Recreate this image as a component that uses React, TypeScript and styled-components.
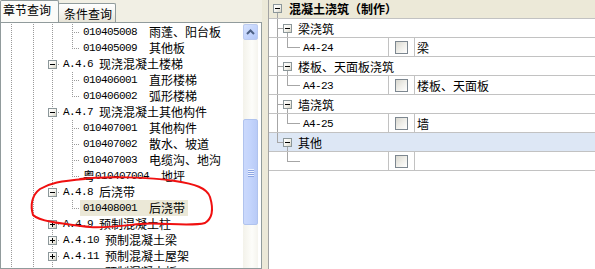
import React from 'react';
import styled, { createGlobalStyle } from 'styled-components';

const CJK = `"Noto Sans CJK SC", "Noto Sans CJK JP", "DejaVu Sans", sans-serif`;
const MONO = `"Liberation Mono", "DejaVu Sans Mono", monospace`;
const DOT = '#9a9a9a';
const SOLID = '#a6a6a6';

const GlobalStyle = createGlobalStyle`
  html, body { margin: 0; padding: 0; background: #ece9d8; overflow: hidden; }
  body { font-family: ${CJK}; font-size: 12px; color: #000; }
  * { box-sizing: border-box; }
`;

type VMode = 'full' | 'top' | 'bottom' | 'none';
interface GuideProps {
  $w: number;
  $at: number;
  $v: VMode;
  $h?: boolean;
  $dotted?: boolean;
  $rowH: number;
  $mid: number;
  $pad?: number;
  $boxTop?: number;
}

function guideBg(p: GuideProps) {
  const c = p.$dotted ? DOT : SOLID;
  const vImg = p.$dotted
    ? `repeating-linear-gradient(to bottom, ${c} 0 1px, transparent 1px 2px)`
    : `linear-gradient(${c}, ${c})`;
  const hImg = p.$dotted
    ? `repeating-linear-gradient(to right, ${c} 0 1px, transparent 1px 2px)`
    : `linear-gradient(${c}, ${c})`;
  const imgs: string[] = [];
  const sizes: string[] = [];
  const poss: string[] = [];
  if (p.$v === 'full') {
    imgs.push(vImg);
    sizes.push(`1px ${p.$rowH}px`);
    poss.push(`${p.$at}px 0px`);
  } else if (p.$v === 'top') {
    imgs.push(vImg);
    sizes.push(`1px ${p.$mid + 1}px`);
    poss.push(`${p.$at}px 0px`);
  } else if (p.$v === 'bottom') {
    imgs.push(vImg);
    sizes.push(`1px ${p.$rowH - p.$mid}px`);
    poss.push(`${p.$at}px ${p.$mid}px`);
  }
  if (p.$h) {
    imgs.push(hImg);
    sizes.push(`${p.$w - p.$at}px 1px`);
    poss.push(`${p.$at}px ${p.$mid}px`);
  }
  if (!imgs.length) return 'background: none;';
  return `background-image: ${imgs.join(', ')}; background-size: ${sizes.join(', ')}; background-position: ${poss.join(', ')}; background-repeat: no-repeat;`;
}

const Guide = styled.div<GuideProps>`
  width: ${(p) => p.$w}px;
  height: ${(p) => p.$rowH}px;
  flex-shrink: 0;
  display: flex;
  align-items: flex-start;
  padding-left: ${(p) => p.$pad ?? 0}px;
  padding-top: ${(p) => p.$boxTop ?? 0}px;
  ${(p) => guideBg(p)}
`;

const ExpandBox = styled.span<{ $open: boolean }>`
  position: relative;
  display: block;
  width: 9px;
  height: 9px;
  border: 1px solid #8c979a;
  background: linear-gradient(135deg, #ffffff 0%, #f3f2ec 55%, #d6d3c4 100%);
  flex-shrink: 0;
  &::before {
    content: '';
    position: absolute;
    left: 1px;
    top: 3px;
    width: 5px;
    height: 1px;
    background: #000;
  }
  &::after {
    content: '';
    display: ${(p) => (p.$open ? 'none' : 'block')};
    position: absolute;
    left: 3px;
    top: 1px;
    width: 1px;
    height: 5px;
    background: #000;
  }
`;

/* ---------- frame ---------- */

const Frame = styled.div`
  position: relative;
  width: 595px;
  height: 269px;
  display: flex;
  background: #ece9d8;
  overflow: hidden;
`;

const LeftPanel = styled.div`
  width: 262px;
  flex-shrink: 0;
  display: flex;
  flex-direction: column;
`;

const Splitter = styled.div`
  width: 6px;
  flex-shrink: 0;
  background: #ece9d8;
`;

const RightPanel = styled.div`
  flex: 1;
  border-left: 1px solid #a3a3a3;
  background: #fff;
  display: flex;
  flex-direction: column;
`;

/* ---------- tabs ---------- */

const TabStrip = styled.div`
  height: 22px;
  flex-shrink: 0;
  display: flex;
  align-items: flex-end;
  background: #f1efe4;
`;

const Tab = styled.div<{ $active?: boolean }>`
  height: ${(p) => (p.$active ? 22 : 19)}px;
  width: ${(p) => (p.$active ? 59 : 58)}px;
  padding-left: ${(p) => (p.$active ? 2 : 5)}px;
  padding-top: 1px;
  margin-left: ${(p) => (p.$active ? 0 : -1)}px;
  border: 1px solid #919b9c;
  border-bottom: none;
  border-radius: 2px 2px 0 0;
  background: ${(p) =>
    p.$active
      ? '#fbfbf8'
      : 'linear-gradient(to bottom, #ffffff 0%, #f4f3ee 50%, #e6e3d6 100%)'};
  font-family: ${CJK};
  font-size: 12px;
  line-height: 16px;
  display: flex;
  align-items: ${(p) => (p.$active ? 'flex-start' : 'center')};
  white-space: nowrap;
  z-index: ${(p) => (p.$active ? 2 : 1)};
`;

const TabBody = styled.div`
  flex: 1;
  min-height: 0;
  display: flex;
  border: 1px solid #919b9c;
  background: #fff;
`;

const Tree = styled.div`
  width: 242px;
  flex-shrink: 0;
  padding-top: 1px;
  overflow: hidden;
  display: flex;
  flex-direction: column;
`;

const TreeRow = styled.div`
  display: flex;
  height: 16px;
  flex-shrink: 0;
`;

const TreeLabel = styled.div<{ $selected?: boolean }>`
  display: flex;
  align-items: center;
  height: 16px;
  padding: 0 3px;
  background: ${(p) => (p.$selected ? '#ebe8d7' : 'transparent')};
  white-space: nowrap;
  line-height: 16px;
`;

const Code = styled.span`
  font-family: ${MONO};
  font-size: 11px;
  letter-spacing: -0.6px;
`;

const Han = styled.span<{ $gap?: number }>`
  font-family: ${CJK};
  font-size: 12px;
  margin-left: ${(p) => p.$gap ?? 0}px;
`;

/* ---------- scrollbar ---------- */

const Scrollbar = styled.div`
  width: 15px;
  margin-right: 3px;
  flex-shrink: 0;
  display: flex;
  flex-direction: column;
  background: linear-gradient(to right, #f3f2ea, #fdfdfa 60%, #f5f4ee);
  padding-top: 1px;
`;

const ScrollButton = styled.div`
  height: 16px;
  border: 1px solid #bccbf0;
  border-radius: 2px;
  background: linear-gradient(135deg, #d6e2fd 0%, #c2d3fc 60%, #b3c7f6 100%);
  display: flex;
  align-items: center;
  justify-content: center;
`;

const Thumb = styled.div<{ $offset: number; $size: number }>`
  margin-top: ${(p) => p.$offset}px;
  height: ${(p) => p.$size}px;
  border: 1px solid #b0c3ee;
  border-radius: 2px;
  background: linear-gradient(to right, #cbd9fc 0%, #c3d4fc 50%, #b9cbf7 100%);
  display: flex;
  flex-direction: column;
  align-items: center;
  justify-content: center;
  gap: 1px;
`;

const Grip = styled.span`
  display: block;
  width: 6px;
  height: 1px;
  background: #eef3ff;
  box-shadow: 0 1px 0 #8da6e3;
`;

/* ---------- right grid ---------- */

const RRow = styled.div<{ $tone?: 'head' | 'hl' | 'plain' }>`
  display: flex;
  height: 19px;
  flex-shrink: 0;
  background: linear-gradient(#c2c2c2, #c2c2c2) 0 100% / 100% 1px no-repeat,
    ${(p) => (p.$tone === 'head' ? '#ece9d8' : p.$tone === 'hl' ? '#dde7f5' : '#ffffff')};
`;

const HeadTitle = styled.div`
  margin-left: 6px;
  font-family: ${CJK};
  font-weight: 700;
  font-size: 12px;
  line-height: 18px;
  white-space: nowrap;
`;

const GroupTitle = styled.div`
  font-family: ${CJK};
  font-size: 12px;
  line-height: 18px;
  padding-top: 1px;
  white-space: nowrap;
`;

const CodeCell = styled.div`
  width: 88px;
  flex-shrink: 0;
  padding-left: 3px;
  padding-top: 1px;
  font-family: ${MONO};
  font-size: 11px;
  letter-spacing: -0.6px;
  line-height: 18px;
`;

const CheckCell = styled.div`
  width: 26px;
  height: 18px;
  flex-shrink: 0;
  border-left: 1px solid #c2c2c2;
  padding-left: 6px;
  padding-top: 3px;
`;

const CheckBox = styled.span`
  display: block;
  width: 13px;
  height: 13px;
  border: 1px solid #7d8790;
  background: linear-gradient(135deg, #d9d8d0 0%, #efeee9 50%, #ffffff 100%);
`;

const TextCell = styled.div`
  flex: 1;
  height: 18px;
  border-left: 1px solid #c2c2c2;
  padding-left: 2px;
  padding-top: 1px;
  font-family: ${CJK};
  font-size: 12px;
  line-height: 18px;
  white-space: nowrap;
`;

const Annotation = styled.svg`
  position: absolute;
  left: 0;
  top: 0;
  pointer-events: none;
`;

/* ---------- data ---------- */

type LeftItem =
  | { kind: 'leaf'; code: string; name: string; last?: boolean; selected?: boolean }
  | { kind: 'group'; code: string; name: string; open: boolean };

const leftItems: LeftItem[] = [
  { kind: 'leaf', code: '010405008', name: '雨蓬、阳台板' },
  { kind: 'leaf', code: '010405009', name: '其他板', last: true },
  { kind: 'group', code: 'A.4.6', name: '现浇混凝土楼梯', open: true },
  { kind: 'leaf', code: '010406001', name: '直形楼梯' },
  { kind: 'leaf', code: '010406002', name: '弧形楼梯', last: true },
  { kind: 'group', code: 'A.4.7', name: '现浇混凝土其他构件', open: true },
  { kind: 'leaf', code: '010407001', name: '其他构件' },
  { kind: 'leaf', code: '010407002', name: '散水、坡道' },
  { kind: 'leaf', code: '010407003', name: '电缆沟、地沟' },
  { kind: 'leaf', code: '粤010407004', name: '地坪', last: true },
  { kind: 'group', code: 'A.4.8', name: '后浇带', open: true },
  { kind: 'leaf', code: '010408001', name: '后浇带', last: true, selected: true },
  { kind: 'group', code: 'A.4.9', name: '预制混凝土柱', open: false },
  { kind: 'group', code: 'A.4.10', name: '预制混凝土梁', open: false },
  { kind: 'group', code: 'A.4.11', name: '预制混凝土屋架', open: false },
  { kind: 'group', code: 'A.4.12', name: '预制混凝土板', open: false },
];

function CodeText({ code }: { code: string }) {
  const m = code.match(/^([^\x00-\x7f]*)(.*)$/);
  const pre = m ? m[1] : '';
  const rest = m ? m[2] : code;
  return (
    <>
      {pre && <Han>{pre}</Han>}
      <Code>{rest}</Code>
    </>
  );
}

const T = { $rowH: 16, $mid: 8, $dotted: true };

function LeftRow({ item }: { item: LeftItem }) {
  return (
    <TreeRow>
      <Guide {...T} $w={21} $at={10} $v="full" />
      <Guide {...T} $w={20} $at={11} $v="full" />
      {item.kind === 'leaf' ? (
        <>
          <Guide {...T} $w={20} $at={10} $v="full" />
          <Guide {...T} $w={18} $at={10} $v={item.last ? 'top' : 'full'} $h />
          <TreeLabel $selected={item.selected}>
            <CodeText code={item.code} />
            <Han $gap={12}>{item.name}</Han>
          </TreeLabel>
        </>
      ) : (
        <>
          <Guide {...T} $w={18} $at={10} $v="full" $h $pad={6} $boxTop={4}>
            <ExpandBox $open={item.open} />
          </Guide>
          <TreeLabel>
            <Code>{item.code}</Code>
            <Han $gap={6}>{item.name}</Han>
          </TreeLabel>
        </>
      )}
    </TreeRow>
  );
}

type RightGroup = { title: string; code: string; text: string; hl?: boolean };
const rightGroups: RightGroup[] = [
  { title: '梁浇筑', code: 'A4-24', text: '梁' },
  { title: '楼板、天面板浇筑', code: 'A4-23', text: '楼板、天面板' },
  { title: '墙浇筑', code: 'A4-25', text: '墙' },
  { title: '其他', code: '', text: '', hl: true },
];

const R = { $rowH: 18, $mid: 9 };

function RightGroupRows({ g, last }: { g: RightGroup; last: boolean }) {
  return (
    <>
      <RRow $tone={g.hl ? 'hl' : 'plain'}>
        <Guide {...R} $w={14} $at={8} $v={last ? 'top' : 'full'} $h />
        <Guide {...R} $w={15} $at={4} $v="bottom" $boxTop={5}>
          <ExpandBox $open />
        </Guide>
        <GroupTitle>{g.title}</GroupTitle>
      </RRow>
      <RRow>
        <Guide {...R} $w={14} $at={8} $v={last ? 'none' : 'full'} />
        <Guide {...R} $w={17} $at={4} $v="top" $h />
        <CodeCell>{g.code}</CodeCell>
        <CheckCell>
          <CheckBox />
        </CheckCell>
        <TextCell>{g.text}</TextCell>
      </RRow>
    </>
  );
}

export default function App() {
  return (
    <>
      <GlobalStyle />
      <Frame>
        <LeftPanel>
          <TabStrip>
            <Tab $active>章节查询</Tab>
            <Tab>条件查询</Tab>
          </TabStrip>
          <TabBody>
            <Tree>
              {leftItems.map((it, i) => (
                <LeftRow key={i} item={it} />
              ))}
            </Tree>
            <Scrollbar>
              <ScrollButton>
                <svg width="9" height="6" viewBox="0 0 9 6">
                  <path d="M1 5 L4.5 1.5 L8 5" fill="none" stroke="#4d6185" strokeWidth="2" />
                </svg>
              </ScrollButton>
              <Thumb $offset={79} $size={106}>
                <Grip />
                <Grip />
                <Grip />
                <Grip />
              </Thumb>
            </Scrollbar>
          </TabBody>
        </LeftPanel>
        <Splitter />
        <RightPanel>
          <RRow $tone="head">
            <Guide {...R} $w={14} $at={8} $v="bottom" $pad={4} $boxTop={4}>
              <ExpandBox $open />
            </Guide>
            <HeadTitle>混凝土浇筑（制作）</HeadTitle>
          </RRow>
          {rightGroups.map((g, i) => (
            <RightGroupRows key={i} g={g} last={i === rightGroups.length - 1} />
          ))}
        </RightPanel>
        <Annotation width="595" height="269" viewBox="0 0 595 269">
          <path
            d="M 80 179 C 105 176, 150 177, 175 181 C 195 184, 207 188, 210 197 C 213 207, 213 218, 205 223 C 190 227, 160 222, 140 224 C 120 226, 105 228, 90 227 C 65 224, 40 222, 33 215 C 30 205, 32 195, 40 189 C 50 183, 60 181, 85 179"
            fill="none"
            stroke="#f01010"
            strokeWidth="2"
            strokeLinecap="round"
          />
        </Annotation>
      </Frame>
    </>
  );
}
